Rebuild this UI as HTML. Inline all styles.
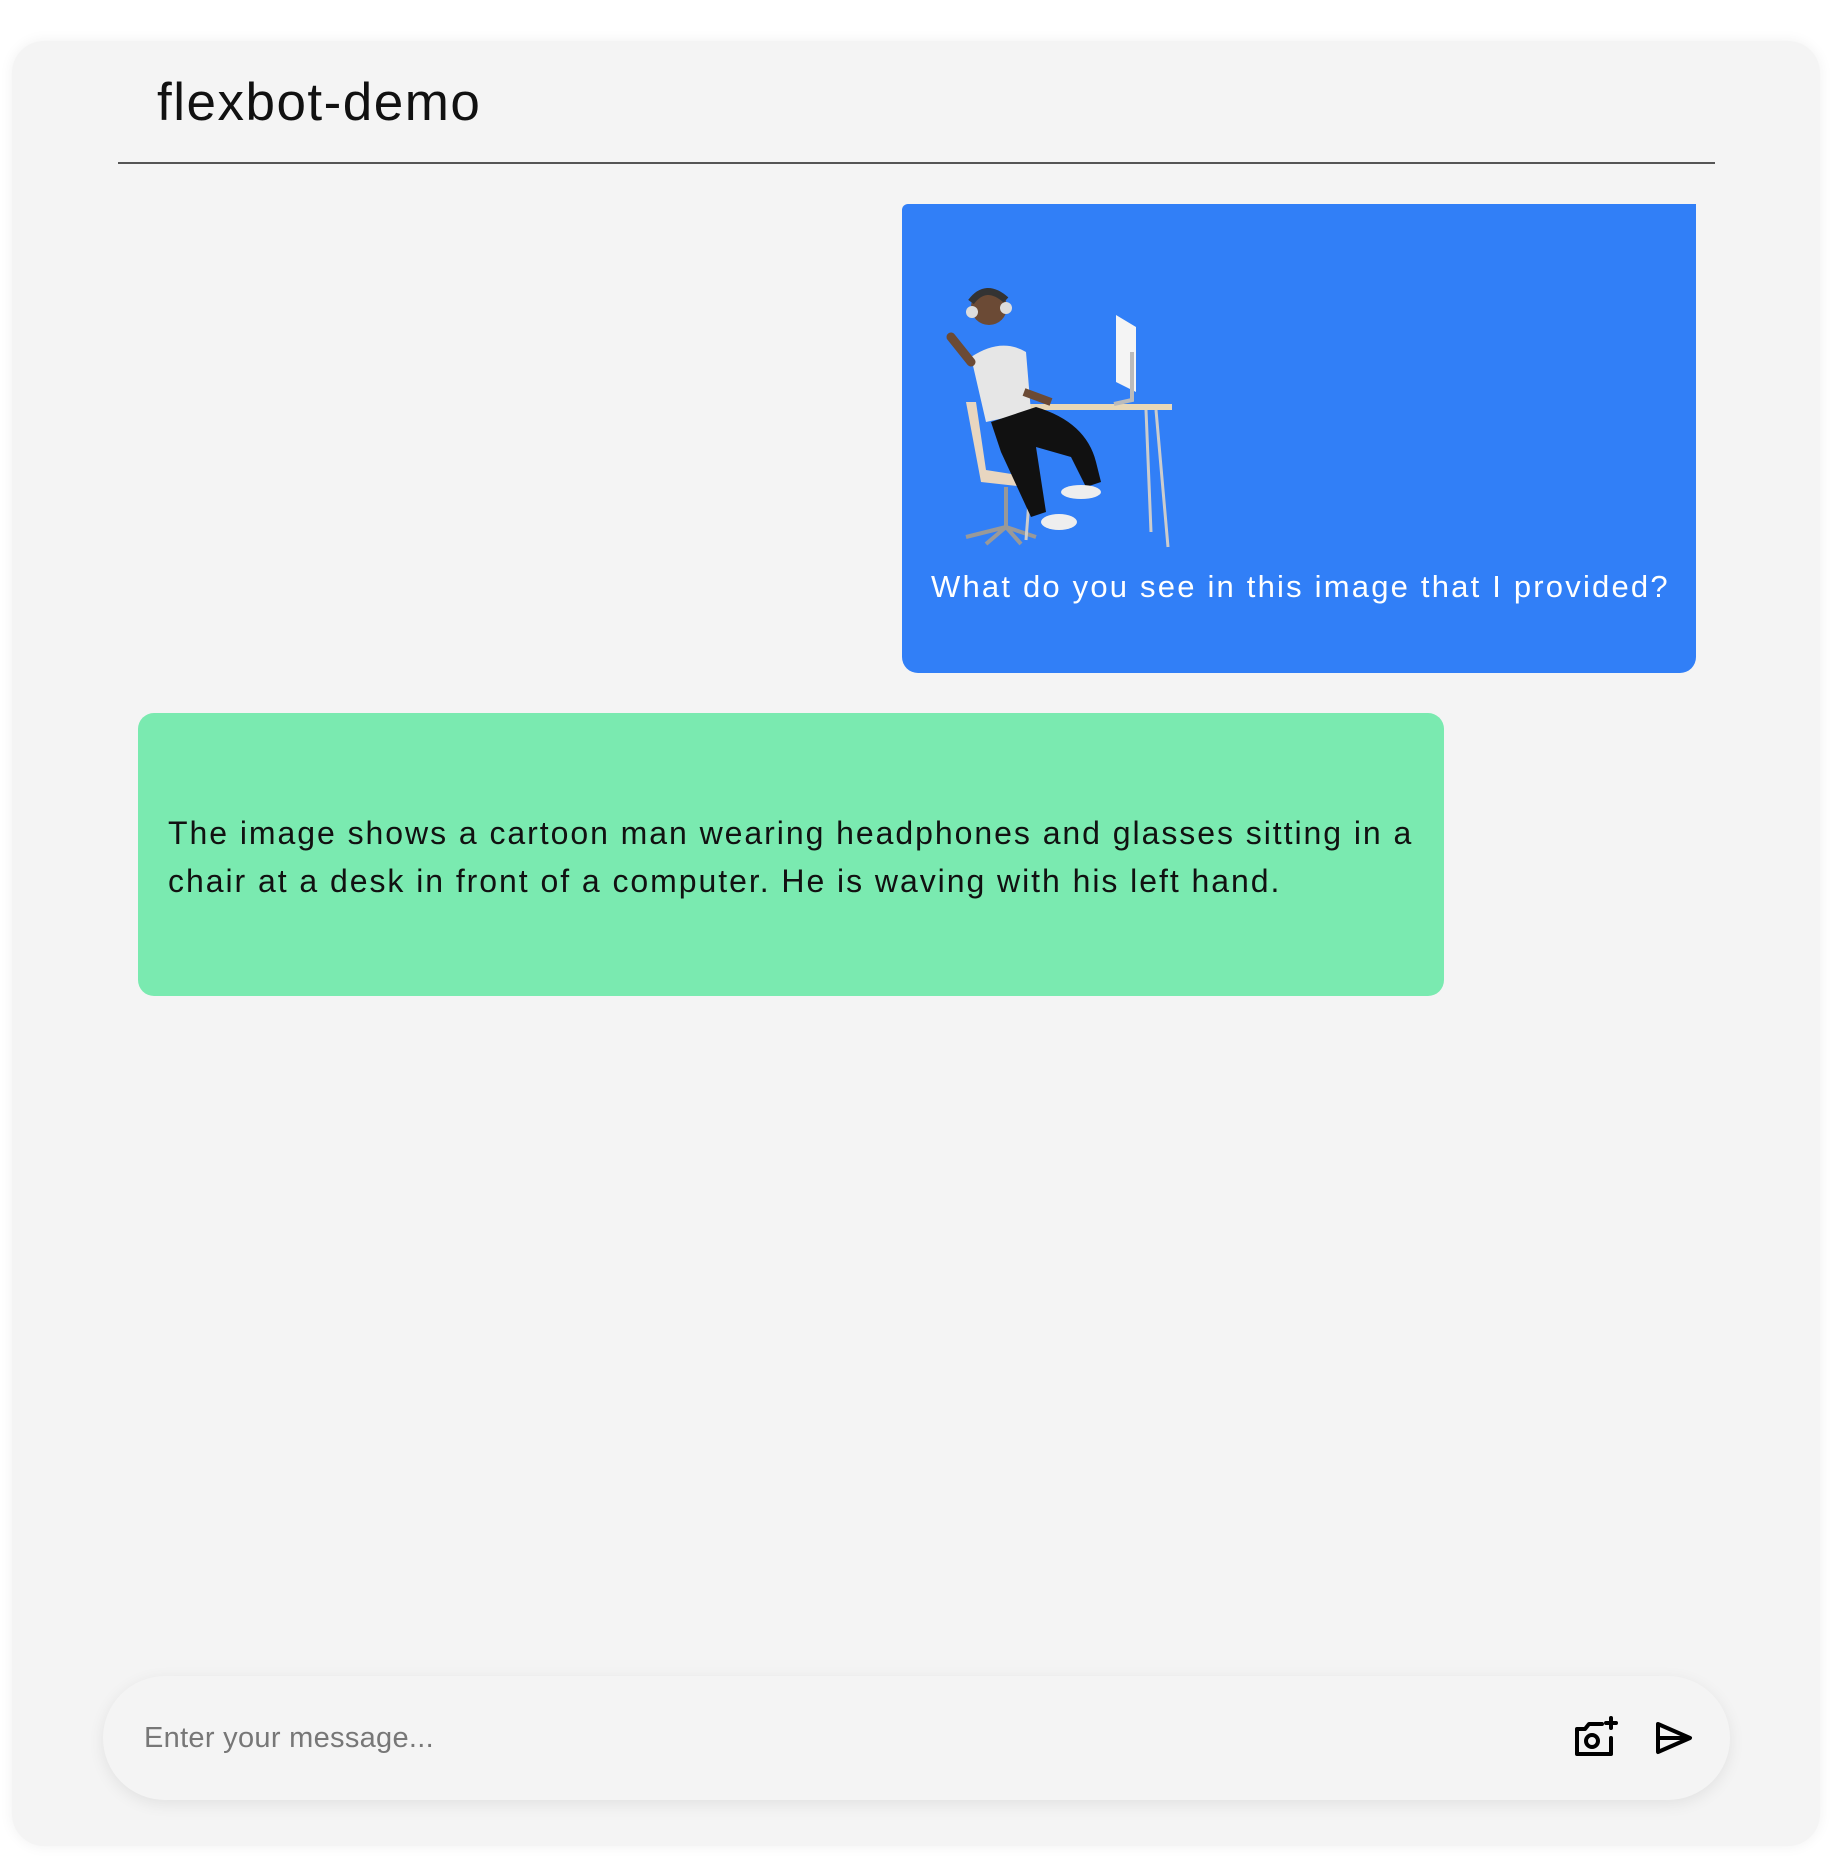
<!DOCTYPE html>
<html><head><meta charset="utf-8"><style>
html,body{margin:0;padding:0;background:#fff;width:1832px;height:1856px;overflow:hidden;font-family:"Liberation Sans",sans-serif}
.card{position:absolute;left:12px;top:41px;width:1808px;height:1805px;background:#f4f4f4;border-radius:32px;box-shadow:0 0 14px rgba(0,0,0,0.06)}
.title{position:absolute;left:157px;top:72px;font-size:53px;color:#111;letter-spacing:1.5px}
.line{position:absolute;left:118px;top:162px;width:1597px;height:2px;background:#555}
.blue{position:absolute;left:902px;top:204px;width:794px;height:469px;background:#317ff7;border-radius:6px 0 16px 16px}
.blue .t{position:absolute;left:29px;top:365px;font-size:31px;color:#fff;white-space:nowrap;letter-spacing:2.2px}
.green{position:absolute;left:138px;top:713px;width:1306px;height:283px;background:#7aeab0;border-radius:16px}
.green .t{position:absolute;left:30px;top:96px;width:1280px;font-size:32px;line-height:48px;color:#111;letter-spacing:1.95px;white-space:nowrap}
.pill{position:absolute;left:103px;top:1676px;width:1627px;height:124px;border-radius:62px;background:#f4f4f4;box-shadow:0 4px 16px rgba(0,0,0,0.08)}
.ph{position:absolute;left:41px;top:46px;font-size:29px;color:#777;letter-spacing:0.3px}
</style></head><body>
<div class="card"></div>
<div class="title">flexbot-demo</div>
<div class="line"></div>
<div class="blue">
<svg style="position:absolute;left:24px;top:78px" width="250" height="270" viewBox="0 0 250 270">
 <path d="M40 120 L55 200 L100 205 L105 195 L60 188 L50 120Z" fill="#e8d6c0"/>
 <path d="M80 205 L80 245 M80 245 L40 255 M80 245 L110 255 M80 245 L60 262 M80 245 L95 262" stroke="#999" stroke-width="4" fill="none"/>
 <rect x="98" y="122" width="148" height="6" fill="#e8d8b8"/>
 <path d="M110 128 L100 258 M230 128 L242 265 M220 128 L225 250" stroke="#ccc" stroke-width="3" fill="none"/>
 <path d="M190 33 L210 45 L210 110 L190 100Z" fill="#f4f4f4"/>
 <path d="M206 70 L206 118 L188 122" stroke="#bbb" stroke-width="4" fill="none"/>
 <path d="M45 75 Q75 55 100 70 L105 130 L60 140 Z" fill="#e6e6e6"/>
 <path d="M65 140 L110 125 Q160 140 170 180 L175 200 L160 205 L145 175 L110 165 L120 230 L105 235 L75 170Z" fill="#111"/>
 <ellipse cx="155" cy="210" rx="20" ry="7" fill="#eee"/>
 <ellipse cx="133" cy="240" rx="18" ry="8" fill="#eee"/>
 <path d="M45 80 L25 55" stroke="#6b4a35" stroke-width="9" stroke-linecap="round"/>
 <path d="M98 110 L125 120" stroke="#6b4a35" stroke-width="8"/>
 <circle cx="63" cy="25" r="18" fill="#6b4a35"/>
 <path d="M45 20 Q60 0 80 18" stroke="#333" stroke-width="7" fill="none"/>
 <circle cx="46" cy="30" r="6" fill="#ddd"/>
 <circle cx="80" cy="26" r="6" fill="#ddd"/>
</svg>
<div class="t">What do you see in this image that I provided?</div>
</div>
<div class="green"><div class="t">The image shows a cartoon man wearing headphones and glasses sitting in a<br>chair at a desk in front of a computer. He is waving with his left hand.</div></div>
<div class="pill"><div class="ph">Enter your message...</div>
<svg style="position:absolute;left:1469px;top:38px" width="48" height="48" viewBox="0 0 48 48" fill="none" stroke="#000" stroke-width="4" stroke-linejoin="round" stroke-linecap="round">
 <path d="M30 10 H17 L13 15 H5 V40 H39 V24"/>
 <circle cx="20" cy="27" r="6"/>
 <path d="M39 4 V14 M34 9 H44"/>
</svg>
<svg style="position:absolute;left:1551px;top:44px" width="40" height="36" viewBox="0 0 40 36" fill="none" stroke="#000" stroke-width="4" stroke-linejoin="round">
 <path d="M4 4 L36 18 L4 32 Z M4 18 H36"/>
</svg>
</div>
</body></html>
